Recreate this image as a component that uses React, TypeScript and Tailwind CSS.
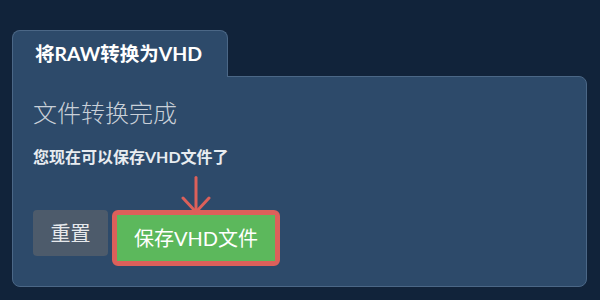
const font = "font-['Lato','Noto_Sans_CJK_SC',sans-serif]";

function ArrowDown() {
  return (
    <svg width="30" height="38" viewBox="0 0 30 38" fill="none" stroke="#dc605a" strokeWidth="3" strokeLinecap="round" strokeLinejoin="round">
      <path d="M15 1.5V36" />
      <path d="M2 22l13 14 13-14" />
    </svg>
  );
}

export default function App() {
  return (
    <div className={`h-[300px] w-[600px] bg-[#11233a] pt-[30px] ${font}`}>
      <div className="ml-[12px] w-[575px]">
        <div className="relative z-10 -mb-px flex h-[47px] w-[216px] items-center rounded-t-lg border border-b-0 border-[#4b6786] bg-[#2d4a6a] pl-[22px]">
          <span className="text-[19.5px] font-bold text-white">将RAW转换为VHD</span>
        </div>
        <div className="rounded-lg rounded-tl-none border border-[#4b6786] bg-[#2d4a6a] pb-[20px] pl-[20px] pt-[20px]">
          <h2 className="text-[24px] font-light leading-[32px] text-[#c9d0d8]">文件转换完成</h2>
          <p className="mt-[16px] text-[16px] font-bold leading-[24px] text-[#e8ecf0]">您现在可以保存VHD文件了</p>
          <div className="mt-[41px] flex items-start gap-[4px]">
            <button className="h-[46px] w-[75px] rounded bg-[#4d5b6b] text-[20px] text-[#e6e9ec]">重置</button>
            <div className="relative rounded-md border-[5px] border-[#dc605a]">
              <div className="absolute bottom-full left-1/2 mb-[1px] -translate-x-1/2">
                <ArrowDown />
              </div>
              <button className="h-[46px] w-[158px] bg-[#5cb85c] text-[20px] text-white">保存VHD文件</button>
            </div>
          </div>
        </div>
      </div>
    </div>
  );
}
